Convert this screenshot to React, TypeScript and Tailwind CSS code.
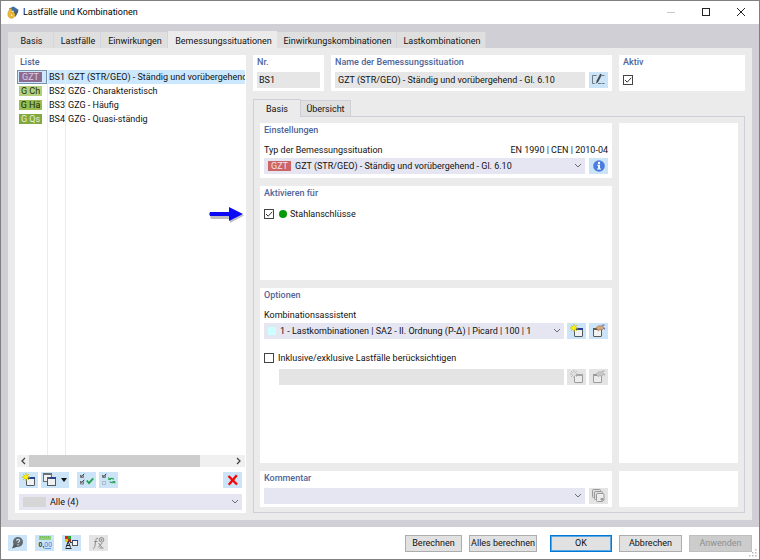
import { useState, type ComponentProps, type ReactNode } from "react";
import clsx from "clsx";

const MAIN_TABS = [
  { label: "Basis", width: "w-[46px]" },
  { label: "Lastfälle", width: "w-[47px]" },
  { label: "Einwirkungen", width: "w-[67px]" },
  { label: "Bemessungssituationen", width: "w-[109px]" },
  { label: "Einwirkungskombinationen", width: "w-[120px]" },
  { label: "Lastkombinationen", width: "w-[89px]" },
];

const SITUATIONS = [
  {
    id: "BS1",
    tag: "GZT",
    tagClass: "bg-[#8f6a90] text-[#d9cfe0]",
    name: "GZT (STR/GEO) - Ständig und vorübergehend",
  },
  { id: "BS2", tag: "G Ch", tagClass: "bg-[#b5d07c] text-[#22300c]", name: "GZG - Charakteristisch" },
  { id: "BS3", tag: "G Hä", tagClass: "bg-[#98bd51] text-[#1c2a08]", name: "GZG - Häufig" },
  { id: "BS4", tag: "G Qs", tagClass: "bg-[#82a93f] text-[#e6efd6]", name: "GZG - Quasi-ständig" },
];

function AppLogo() {
  return (
    <svg viewBox="0 0 12 13" className="h-[13px] w-3">
      <path d="M2 2.600 6.500.6l5 3.200-.8 3.600-2.400-2.200L4 4.600z" fill="#3f6ea3" />
      <path d="M6.500 5.200 11 4.600 9.600 9 8 11z" fill="#4a5f78" />
      <path d="M2.800 2.400c-.6 2-2 3.700-1.900 6.200.1 2.300 1.500 3.700 3.400 3.700 2.100 0 3.700-1.400 3.700-3.300 0-1.800-1.300-2.900-2.900-2.900-.6 0-1 .1-1.300.3l1-3.400z" fill="#f0bf2e" stroke="#b88412" strokeWidth=".5" />
      <circle cx="4.600" cy="9.200" r="1.300" fill="#fff0b0" stroke="#b88412" strokeWidth=".5" />
    </svg>
  );
}

function NewIcon({ muted = false }: { muted?: boolean }) {
  const line = muted ? "#9b9b9b" : "#55585c";
  return (
    <svg viewBox="0 0 14 13" className="h-[13px] w-3.5">
      <rect x="4.500" y="4.500" width="8" height="8" rx=".5" fill={muted ? "#ececec" : "#f0f1f2"} stroke={line} />
      <path d="M4 5h9" stroke={muted ? "#a5a5a5" : "#55585c"} strokeWidth="2" />
      <path d="M8 5h5" stroke={muted ? "#a5a5a5" : "#27408f"} strokeWidth="2" />
      <path d="M4 0v8M0 4h8M1.200 1.200l5.600 5.600M6.800 1.200 1.200 6.800" stroke={muted ? "#b5b5b5" : "#c9b800"} />
      <circle cx="4" cy="4" r="2" fill={muted ? "#e2e2e2" : "#fff200"} />
    </svg>
  );
}

function EditIcon({ muted = false }: { muted?: boolean }) {
  const line = muted ? "#9b9b9b" : "#5a5a5a";
  return (
    <svg viewBox="0 0 14 13" className="h-[13px] w-3.5">
      <rect x="1.500" y="4.500" width="8" height="8" rx=".5" fill={muted ? "#ececec" : "#f4f2ef"} stroke={line} />
      <path d="M1 5h9" stroke={line} strokeWidth="2" />
      <path d="M4 3.800 6.500 1.800l3.800.1 1.600 1.800-1.800 2.300-2.200-.3-1.700 1.300-.7-1.200z" fill={muted ? "#c9c9c9" : "#d9a77c"} stroke={muted ? "#a5a5a5" : "#8d6344"} strokeWidth=".5" />
      <path d="M9.800 1.500 12.500.8M11.300 3.800 13 5.200" stroke={muted ? "#b0b0b0" : "#5f77b5"} strokeWidth="1.200" />
    </svg>
  );
}

function CopyIcon() {
  return (
    <svg viewBox="0 0 14 13" className="h-[13px] w-3.5">
      <rect x=".5" y=".5" width="8" height="8" fill="#f0f1f2" stroke="#6a6d72" />
      <path d="M0 1h9" stroke="#6a6d72" strokeWidth="2" />
      <rect x="4.500" y="4.500" width="8" height="8" fill="#f0f1f2" stroke="#55585c" />
      <path d="M4 5h9" stroke="#55585c" strokeWidth="2" />
      <path d="M7 5h6" stroke="#27408f" strokeWidth="2" />
    </svg>
  );
}

function CheckAllIcon() {
  return (
    <svg viewBox="0 0 14 13" className="h-[13px] w-3.5" fill="none">
      <path d="M.5 2.500v2h3v-2M.5 8.500v2.500h3V8.500" stroke="#777" />
      <path d="m.5 2 1.300 1.600L4.200.8M.5 8l1.300 1.600 2.400-2.800" stroke="#333" />
      <path d="m6.800 7.500 2.200 2.700 4.200-4.800" stroke="#1fa347" strokeWidth="1.800" />
    </svg>
  );
}

function SwapCheckIcon() {
  return (
    <svg viewBox="0 0 14 13" className="h-[13px] w-3.5" fill="none">
      <path d="M.5 2.500v2h3v-2" stroke="#777" />
      <path d="m.5 2 1.300 1.600L4.200.8" stroke="#333" />
      <rect x=".5" y="8.500" width="3" height="3" stroke="#b3bcc4" />
      <path d="M7.500 6.200c1.200-1.200 3.200-1 4.300.2M12 8.800c-1.200 1.200-3.200 1-4.300-.2" stroke="#27a552" strokeWidth="1.400" />
      <path d="M6.300 4v3h3zM13.200 11V8h-3z" fill="#27a552" />
    </svg>
  );
}

function DeleteIcon() {
  return (
    <svg viewBox="-1 -1 14 14" className="size-3.5">
      <path d="m1.500 2 8.500 8.500M9.800 1.300 1.800 10.800" stroke="#f50808" strokeWidth="2.400" />
    </svg>
  );
}

function RenameIcon() {
  return (
    <svg viewBox="0 0 14 13" className="h-[13px] w-3.5" fill="none">
      <path d="M4.500 2.500h-4v8h2.300" stroke="#6b7b88" />
      <path d="M6 10.500h6.500M10 2.500h2.500" stroke="#6b7b88" strokeDasharray="3 .6" />
      <path d="m8.200.8-3.700 7.200-.4 2.700 2.100-1.600L10 1.700z" fill="#4a4a4a" />
    </svg>
  );
}

function InfoIcon() {
  return (
    <svg viewBox="-1 -1 14 14" className="size-3.5">
      <circle cx="6" cy="6" r="5.800" fill="#4a7be0" />
      <circle cx="6" cy="3" r="1.200" fill="#fff" />
      <path d="M4.200 4.800H7v3.700h1v1H4.100v-1h1V5.800h-.9z" fill="#fff" />
    </svg>
  );
}

function LibraryIcon() {
  return (
    <svg viewBox="0 0 14 13" className="h-[13px] w-3.5" fill="#dedede" stroke="#999">
      <rect x=".5" y=".5" width="8" height="8" rx="1" />
      <rect x="2.500" y="2.500" width="8" height="8" rx="1" />
      <path d="M4.500 5.500q0-1 1-1h5.500q1 0 1 1v5.500l-1.500 1.500h-5q-1 0-1-1z" fill="#ececec" />
      <path d="M9 9.500h2v1.500H9z" fill="#888" />
    </svg>
  );
}

function HelpIcon() {
  return (
    <svg viewBox="0 0 14 14" className="size-3.5" fill="none">
      <circle cx="7" cy="6" r="5" fill="#636b70" />
      <path d="M1 12.500 3 7.500l4 3z" fill="#4f585e" />
      <path d="M5.500 4.800c.1-1.900 3.200-1.800 3.100 0-.1 1-1.600 1.200-1.600 2.300M7 8.200v1.200" stroke="#cfe6f7" strokeWidth="1.100" />
    </svg>
  );
}

function UnitsIcon() {
  return (
    <svg viewBox="1 0 14 14" className="size-3.5">
      <rect x="2" y="0" width="12" height="4" fill="#8fd07a" />
      <path d="M3.500 0v2M5.500 0v1.500M7.500 0v2M9.500 0v1.500M11.500 0v2" stroke="#5fa84c" strokeWidth=".6" />
      <text x="1.500" y="11" fontSize="7" fontWeight="700" fontFamily="Liberation Sans, sans-serif" fill="#333">
        0,<tspan fill="#3a78d8" fontWeight="400">00</tspan>
      </text>
      <path d="M7.500 12.500h6.500" stroke="#3a78d8" strokeWidth=".7" />
    </svg>
  );
}

function DisplayIcon() {
  return (
    <svg viewBox="0 0 14 14" className="size-3.5" fill="none">
      <path d="M0 0h3v3H0z" fill="#e02020" />
      <path d="M3 0h3v3H3z" fill="#28a428" />
      <path d="M0 3h3v3H0z" fill="#e8c800" />
      <path d="M3 3h3v3H3z" fill="#9c3a2a" />
      <path d="M1 11.500 3.200 5.500l2.300 6M1.800 9.500h3M.5 12.500h6" stroke="#222" />
      <path d="M5 6.500h3" stroke="#444" />
      <rect x="7.500" y="4.500" width="5" height="5" fill="#f5f5f5" stroke="#555" />
      <path d="M7 4.500h6" stroke="#27408f" />
    </svg>
  );
}

function FormulaIcon() {
  return (
    <svg viewBox="0 0 14 14" className="size-3.5" fill="none" stroke="#8d8d8d">
      <path d="M6 2.500c-1.500-.8-2 .5-2.200 2L2.800 10.500c-.2 1.500-.9 2.200-1.900 1.700M2 5.500h3.500" />
      <path d="m6.500 7 3.500 4.500M10.200 7l-4 4.500M7.500 12h4" />
      <circle cx="9.500" cy="3.800" r="2.300" />
      <path d="M9.500 2.500v2.600M8.200 3.800h2.600" strokeWidth=".7" />
    </svg>
  );
}

function Chevron() {
  return (
    <svg
      viewBox="0 0 8 6"
      className="pointer-events-none absolute right-[3px] top-[5px] h-1.5 w-2"
      fill="none"
      stroke="#6b6b78"
    >
      <path d="m1 1 3 3 3-3" />
    </svg>
  );
}

function Card({ title, className, children }: { title?: string; className?: string; children?: ReactNode }) {
  return (
    <section className={clsx("bg-white px-1", className)}>
      {title && <h2 className="h-3.5 font-medium leading-[14px] text-[#50659a]">{title}</h2>}
      {children}
    </section>
  );
}

interface IconButtonProps extends ComponentProps<"button"> {
  label: string;
  wide?: boolean;
}

function IconButton({ label, wide, children, ...props }: IconButtonProps) {
  return (
    <button
      type="button"
      aria-label={label}
      className={clsx(
        "flex h-4 shrink-0 items-start bg-[#cce4f7] pt-px disabled:bg-[#e4e4e4]",
        wide ? "w-7 gap-1 pl-0.5" : "w-[19px] pl-[3px]",
      )}
      {...props}
    >
      {children}
    </button>
  );
}

interface DropdownProps {
  id: string;
  label?: string;
  options: string[];
  badge?: ReactNode;
  padding: string;
}

function Dropdown({ id, label, options, badge, padding }: DropdownProps) {
  return (
    <div className="relative min-w-0 flex-1">
      <select
        id={id}
        aria-label={label}
        className={clsx("block h-4 w-full appearance-none bg-[#e6e6f2] pr-4 leading-4 outline-none", padding)}
      >
        {options.map((option) => (
          <option key={option}>{option}</option>
        ))}
      </select>
      {badge}
      <Chevron />
    </div>
  );
}

function Checkbox({ id, label, defaultChecked }: { id: string; label?: string; defaultChecked?: boolean }) {
  return (
    <span className="relative block size-2.5 shrink-0">
      <input
        id={id}
        type="checkbox"
        aria-label={label}
        defaultChecked={defaultChecked}
        className="peer block size-2.5 appearance-none border border-[#444] bg-white"
      />
      <svg
        viewBox="0 0 10 10"
        className="pointer-events-none absolute inset-0 hidden size-2.5 peer-checked:block"
        fill="none"
        stroke="#333"
      >
        <path d="M2 5 4.200 7.200 8.200 2.800" />
      </svg>
    </span>
  );
}

function TitleBar() {
  return (
    <header className="flex h-[23px] items-center bg-white pl-1.5 pr-px">
      <AppLogo />
      <h1 className="ml-1 flex-1 pb-px text-black">Lastfälle und Kombinationen</h1>
      <button type="button" aria-label="Minimieren" disabled className="flex h-full w-[35px] justify-center pt-1.5">
        <svg viewBox="0 0 10 10" className="size-2.5" stroke="#c9c9c9">
          <path d="M1 5.500h8" />
        </svg>
      </button>
      <button type="button" aria-label="Maximieren" className="flex h-full w-[35px] justify-center pt-1.5">
        <svg viewBox="0 0 10 10" className="size-2.5" fill="none" stroke="#222">
          <rect x="1.500" y="1.500" width="7" height="7" />
        </svg>
      </button>
      <button type="button" aria-label="Schließen" className="flex h-full w-[35px] justify-center pt-1.5">
        <svg viewBox="0 0 10 10" className="size-2.5" stroke="#222">
          <path d="m1 1 8 8M9 1 1 9" />
        </svg>
      </button>
    </header>
  );
}

function SituationList() {
  const [selected, setSelected] = useState("BS1");

  return (
    <section className="flex w-[231px] shrink-0 flex-col bg-white pb-[3px] pl-0.5 pr-px">
      <h2 className="h-[15px] pl-[3px] font-medium leading-[15px] text-[#50659a]">Liste</h2>
      <div className="relative flex-1 overflow-hidden">
        <table className="w-full table-fixed border-collapse">
          <colgroup>
            <col className="w-[30px]" />
            <col className="w-[18px]" />
            <col />
          </colgroup>
          <tbody>
            {SITUATIONS.map(({ id, tag, tagClass, name }) => {
              const active = id === selected;
              return (
                <tr key={id} onClick={() => setSelected(id)} className={clsx("h-3.5", active && "bg-[#cce8ff]")}>
                  <td className={clsx("p-0", active && "outline-1 -outline-offset-1 outline-[#7a93a8]")}>
                    <span className={clsx("ml-0.5 block h-2.5 w-[23px] text-center leading-[10px]", tagClass)}>{tag}</span>
                  </td>
                  <td className="whitespace-nowrap py-0 pl-0.5 pr-0">{id}</td>
                  <td className="whitespace-nowrap py-0 pl-[3px] pr-0">{name}</td>
                </tr>
              );
            })}
          </tbody>
        </table>
        {/* column rules run down the empty part of the list */}
        <div className="pointer-events-none absolute inset-y-0 left-[30px] w-[19px] border-x border-[#ececec]" />
      </div>
      <div className="flex h-3 items-center bg-[#f0f0f0]">
        <button type="button" aria-label="Nach links" className="flex w-3 justify-center">
          <svg viewBox="0 0 6 8" className="h-2 w-1.5" fill="none" stroke="#444" strokeWidth="1.300">
            <path d="M5 1 2 4l3 3" />
          </svg>
        </button>
        <div className="flex-1">
          <div className="h-3 w-[84%] bg-[#cdcdcd]" />
        </div>
        <button type="button" aria-label="Nach rechts" className="flex w-3 justify-center">
          <svg viewBox="0 0 6 8" className="h-2 w-1.5" fill="none" stroke="#444" strokeWidth="1.300">
            <path d="m1 1 3 3-3 3" />
          </svg>
        </button>
      </div>
      <div className="mt-[5px] flex gap-[3px] pl-0.5 pr-[3px]">
        <IconButton label="Neu">
          <NewIcon />
        </IconButton>
        <IconButton label="Kopieren" wide>
          <CopyIcon />
          <svg viewBox="0 0 6 4" className="mt-[5px] h-1 w-1.5">
            <path d="M0 0h6L3 4z" fill="#111" />
          </svg>
        </IconButton>
        <div className="w-0.5" />
        <IconButton label="Alle aktivieren">
          <CheckAllIcon />
        </IconButton>
        <IconButton label="Auswahl umkehren">
          <SwapCheckIcon />
        </IconButton>
        <div className="flex-1" />
        <IconButton label="Löschen">
          <DeleteIcon />
        </IconButton>
      </div>
      <div className="mt-1.5 flex pl-0.5 pr-[3px]">
        <Dropdown
          id="filter"
          label="Filter"
          options={["Alle (4)"]}
          padding="pl-[31px]"
          badge={<span className="pointer-events-none absolute left-1 top-[3px] h-2.5 w-[23px] bg-[#d6d6d6]" />}
        />
      </div>
    </section>
  );
}

function Pointer() {
  return (
    <svg viewBox="0 0 36 18" className="pointer-events-none absolute left-[-52px] top-5 h-[18px] w-9">
      <path d="M3 8h19V3.500L36 9.500 22 17v-4H3q-1.500-2 0-5z" fill="#000" opacity=".25" />
      <path d="M2 6h19V1l14 7-14 7v-5H2Q.5 8 2 6z" fill="#0a0af5" />
    </svg>
  );
}

function SituationForm() {
  return (
    <div className="flex min-w-0 flex-1 gap-[7px] border border-[#cfcfd8] px-1.5 pb-[5px] pt-1.5">
      <div className="flex min-w-0 flex-1 flex-col gap-2">
        <Card title="Einstellungen" className="pb-1">
          <div className="mt-1.5 flex h-[15px] justify-between leading-[14px]">
            <label htmlFor="type">Typ der Bemessungssituation</label>
            <span>EN 1990 | CEN | 2010-04</span>
          </div>
          <div className="flex gap-1">
            <Dropdown
              id="type"
              options={["GZT (STR/GEO) - Ständig und vorübergehend - Gl. 6.10"]}
              padding="pl-[31px]"
              badge={
                <span className="pointer-events-none absolute left-1 top-[3px] h-2.5 w-[23px] bg-[#cb6566] text-center leading-[10px] text-[#f7e3e3]">
                  GZT
                </span>
              }
            />
            <IconButton label="Info">
              <InfoIcon />
            </IconButton>
          </div>
        </Card>

        <Card title="Aktivieren für" className="relative h-[94px]">
          <div className="mt-2 flex h-3 items-center">
            <Checkbox id="steel" defaultChecked />
            <span className="ml-[5px] size-2 rounded-full bg-[#089808]" />
            <label htmlFor="steel" className="ml-[3px]">
              Stahlanschlüsse
            </label>
          </div>
          <Pointer />
        </Card>

        <Card title="Optionen" className="flex-1">
          <label htmlFor="wizard" className="mt-1.5 block h-[15px] leading-[14px]">
            Kombinationsassistent
          </label>
          <div className="flex gap-[3px]">
            <Dropdown
              id="wizard"
              options={["1 - Lastkombinationen | SA2 - II. Ordnung (P-Δ) | Picard | 100 | 1"]}
              padding="pl-4"
              badge={<span className="pointer-events-none absolute left-1 top-1 size-2 bg-[#ccffff]" />}
            />
            <IconButton label="Neuer Kombinationsassistent">
              <NewIcon />
            </IconButton>
            <IconButton label="Kombinationsassistent bearbeiten">
              <EditIcon />
            </IconButton>
          </div>
          <div className="mt-[13px] flex h-3 items-center gap-1">
            <Checkbox id="inclusive" />
            <label htmlFor="inclusive">Inklusive/exklusive Lastfälle berücksichtigen</label>
          </div>
          <div className="mt-[5px] flex gap-[3px] pl-[15px]">
            <input aria-label="Inklusive/exklusive Lastfälle" disabled className="h-4 min-w-0 flex-1 bg-[#e4e4e4]" />
            <IconButton label="Neue Beziehung" disabled>
              <NewIcon muted />
            </IconButton>
            <IconButton label="Beziehung bearbeiten" disabled>
              <EditIcon muted />
            </IconButton>
          </div>
        </Card>

        <Card title="Kommentar" className="pb-[3px]">
          <div className="mt-[3px] flex gap-1">
            <Dropdown id="comment" label="Kommentar" options={[""]} padding="pl-1" />
            <IconButton label="Kommentare" disabled>
              <LibraryIcon />
            </IconButton>
          </div>
        </Card>
      </div>

      <div className="flex w-[119px] shrink-0 flex-col gap-2">
        <Card className="flex-1" />
        <Card className="h-9" />
      </div>
    </div>
  );
}

function SituationDetails() {
  return (
    <div className="flex min-w-0 flex-1 flex-col">
      <div className="flex gap-[7px]">
        <Card title="Nr." className="w-[71px] pb-[3px]">
          <input
            aria-label="Nr."
            readOnly
            value="BS1"
            className="mt-[3px] block h-4 w-full bg-[#e6e6e6] px-0.5 outline-none"
          />
        </Card>
        <Card title="Name der Bemessungssituation" className="flex-1 pb-[3px]">
          <div className="mt-[3px] flex gap-1">
            <input
              aria-label="Name der Bemessungssituation"
              readOnly
              value="GZT (STR/GEO) - Ständig und vorübergehend - Gl. 6.10"
              className="h-4 min-w-0 flex-1 bg-[#e6e6e6] px-[3px] outline-none"
            />
            <IconButton label="Namen bearbeiten">
              <RenameIcon />
            </IconButton>
          </div>
        </Card>
        <Card title="Aktiv" className="w-[126px] pb-[3px]">
          <div className="mt-1.5">
            <Checkbox id="active" label="Aktiv" defaultChecked />
          </div>
        </Card>
      </div>

      <div className="mt-2 flex items-end" role="tablist">
        <button
          type="button"
          role="tab"
          aria-selected="true"
          className="z-10 -mb-px h-[18px] w-12 border border-b-0 border-[#cfcfd8] bg-[#ebebeb]"
        >
          Basis
        </button>
        <button
          type="button"
          role="tab"
          aria-selected="false"
          className="h-4 w-[50px] border border-b-0 border-l-0 border-[#cfcfd8] bg-[#e0e0e0]"
        >
          Übersicht
        </button>
      </div>
      <div className="flex flex-1">
        <SituationForm />
      </div>
    </div>
  );
}

function DialogButton({ className, ...props }: ComponentProps<"button">) {
  return (
    <button
      type="button"
      className={clsx(
        "h-[17px] whitespace-nowrap border bg-[#e1e1e1] leading-[14px] disabled:border-[#bfbfbf] disabled:bg-[#cccccc] disabled:text-[#8f8f8f]",
        className,
      )}
      {...props}
    />
  );
}

function Footer() {
  return (
    <footer className="relative flex h-8 items-center bg-white px-[7px]">
      <div className="flex gap-2">
        <IconButton label="Hilfe">
          <HelpIcon />
        </IconButton>
        <IconButton label="Einheiten und Dezimalstellen">
          <UnitsIcon />
        </IconButton>
        <IconButton label="Anzeige">
          <DisplayIcon />
        </IconButton>
        <IconButton label="Formel" disabled>
          <FormulaIcon />
        </IconButton>
      </div>
      <div className="ml-auto flex gap-[7px]">
        <DialogButton className="w-[57px] border-[#adadad]">Berechnen</DialogButton>
        <DialogButton className="w-[68px] border-[#adadad]">Alles berechnen</DialogButton>
        <DialogButton className="ml-1.5 w-[62px] border-[#0078d7] outline-1 -outline-offset-2 outline-[#5aa7e4]">OK</DialogButton>
        <DialogButton className="w-[63px] border-[#adadad]">Abbrechen</DialogButton>
        <DialogButton className="w-[63px]" disabled>
          Anwenden
        </DialogButton>
      </div>
      <svg viewBox="0 0 8 8" className="absolute bottom-0.5 right-0.5 size-2" fill="#bdbdbd">
        <path d="M6 0h1.500v1.500H6zM3 3h1.500v1.500H3zM6 3h1.500v1.500H6zM0 6h1.500v1.500H0zM3 6h1.500v1.500H3zM6 6h1.500v1.500H6z" />
      </svg>
    </footer>
  );
}

export default function App() {
  const [tab, setTab] = useState("Bemessungssituationen");

  return (
    <div className="flex min-h-screen flex-col border border-[#808080] bg-[#cfcfd5] font-[Roboto,'Noto_Sans',sans-serif] text-[9px] leading-3 text-[#111]">
      <TitleBar />
      <main className="flex flex-1 flex-col px-[7px] pb-[7px] pt-[7px]">
        <div className="flex items-end" role="tablist">
          {MAIN_TABS.map(({ label, width }) => (
            <button
              key={label}
              type="button"
              role="tab"
              aria-selected={label === tab}
              onClick={() => setTab(label)}
              className={clsx(
                "whitespace-nowrap pl-0.5 pt-0.5",
                width,
                label === tab ? "h-[17px] bg-[#ebebeb]" : "h-4 border-r border-[#d6d6da] bg-[#dfdfdf]",
              )}
            >
              {label}
            </button>
          ))}
        </div>
        <div className="flex flex-1 gap-[7px] bg-[#ebebeb] p-[7px]">
          <SituationList />
          <SituationDetails />
        </div>
      </main>
      <Footer />
    </div>
  );
}
